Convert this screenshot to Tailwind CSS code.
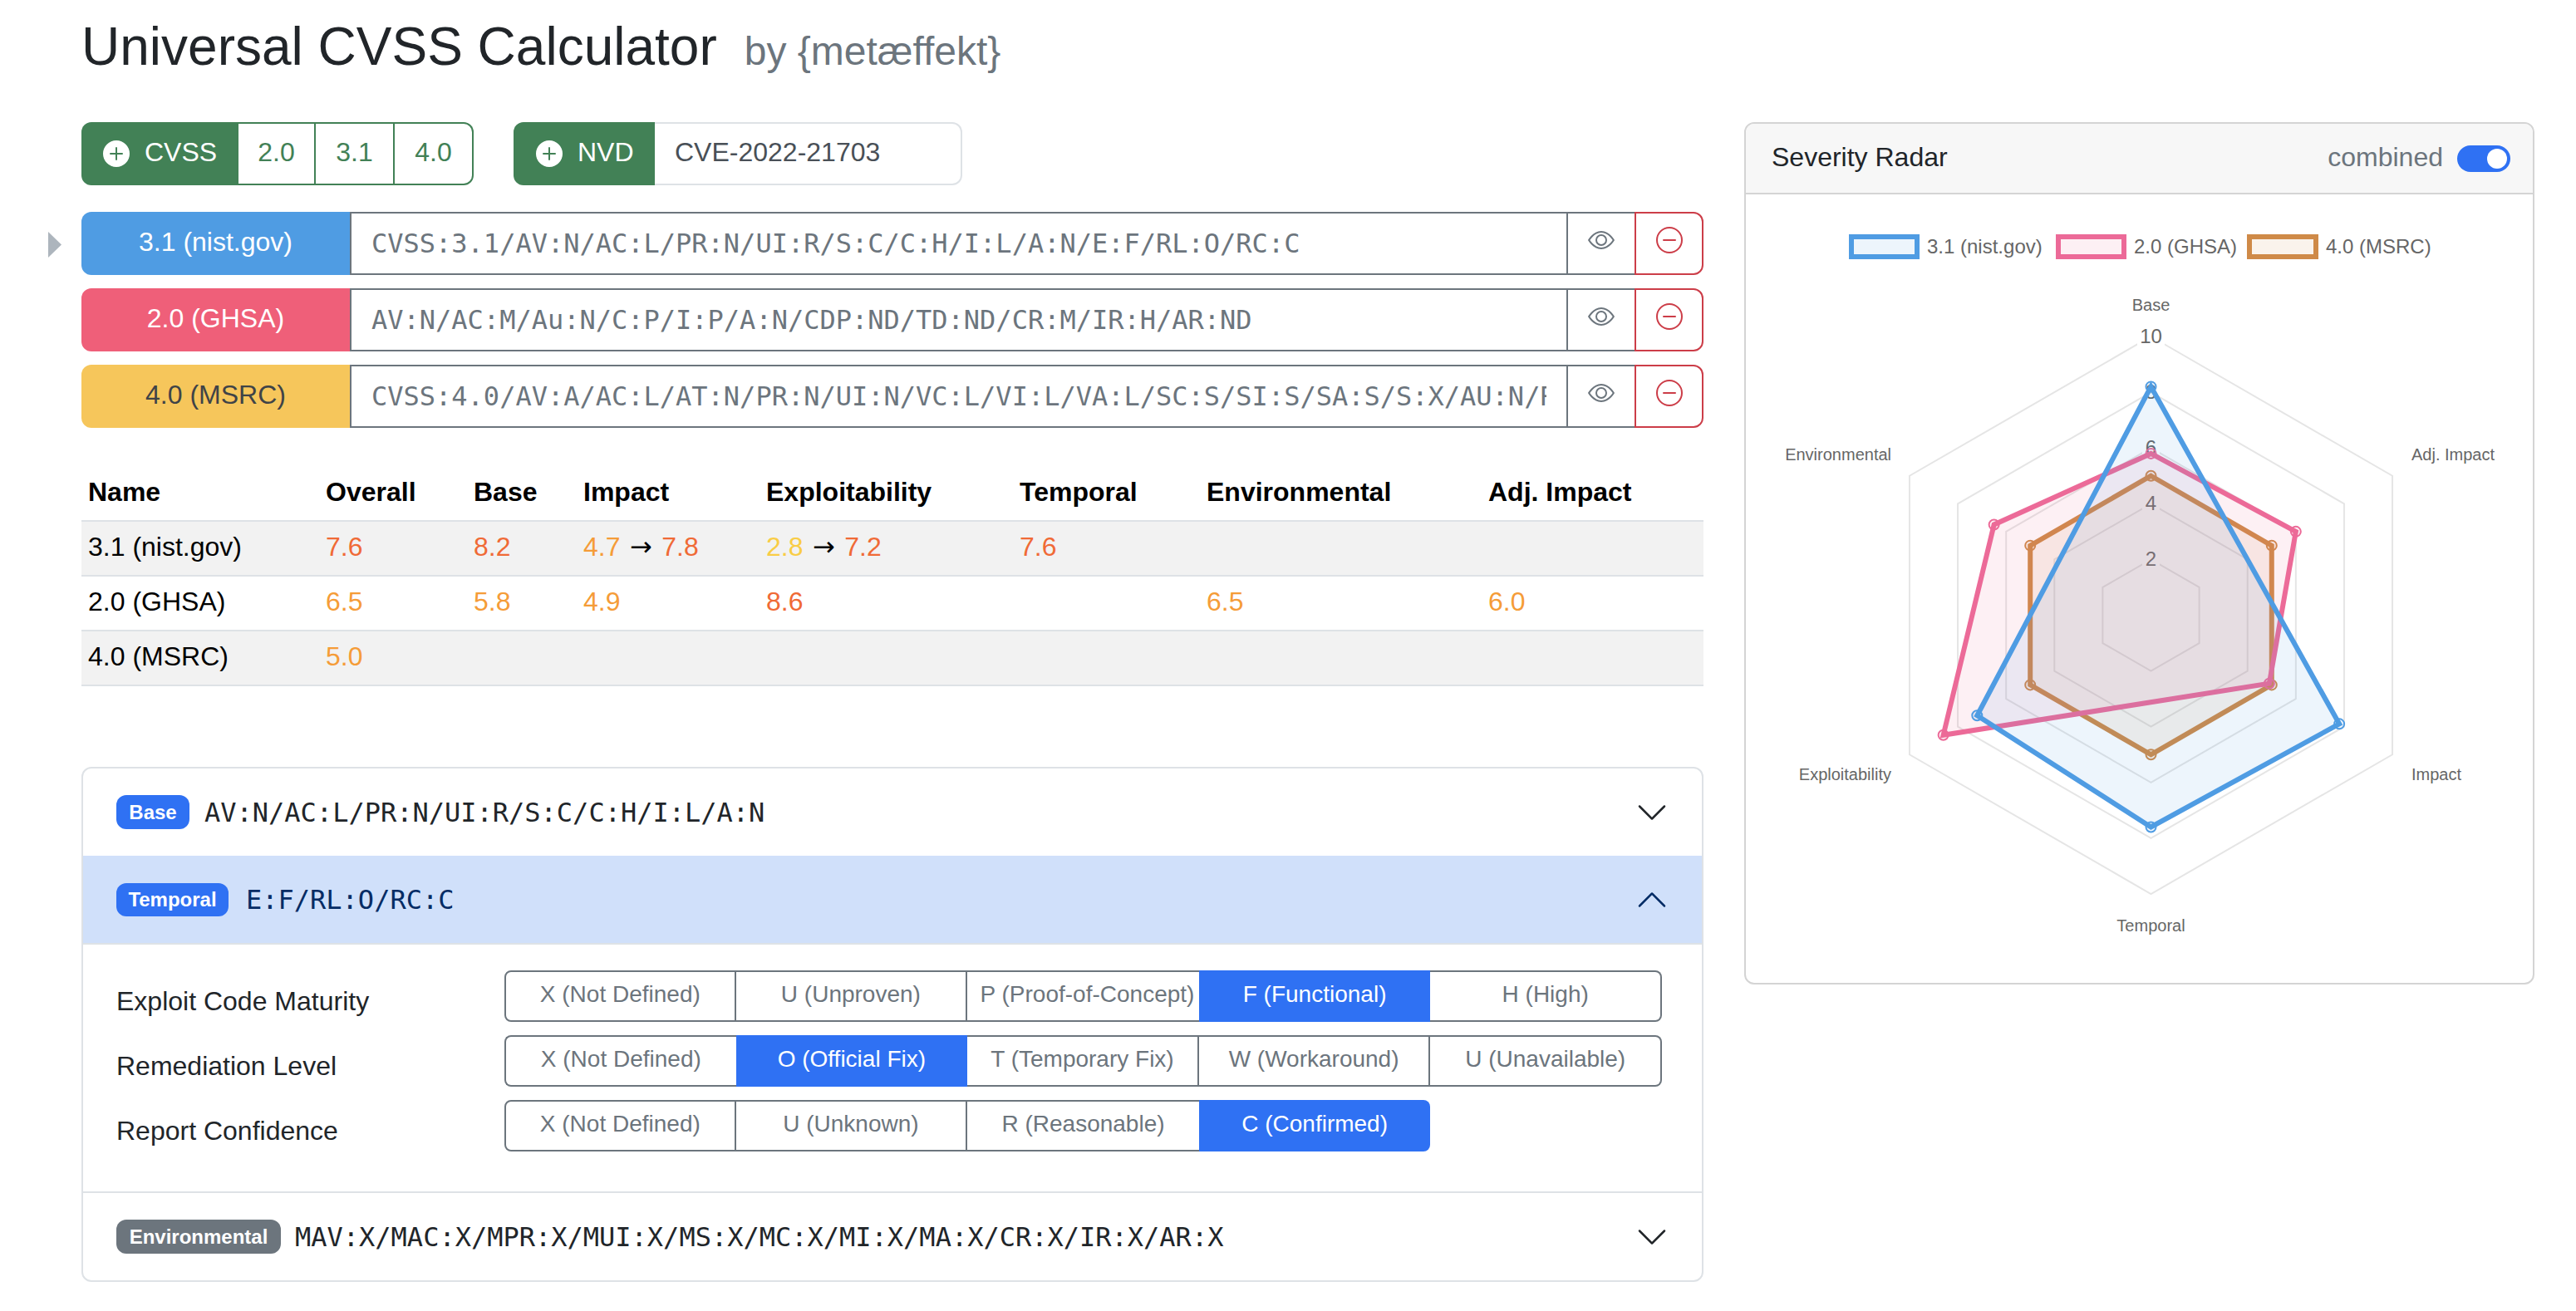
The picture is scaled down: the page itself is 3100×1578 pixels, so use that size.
<!DOCTYPE html>
<html>
<head>
    <meta charset="utf-8">
    <title>Universal CVSS Calculator</title>
    <script src="https://cdn.jsdelivr.net/npm/@tailwindcss/browser@4"></script>
</head>
<body class="bg-white text-[#212529] font-['Liberation_Sans',Arial,sans-serif] text-[32px] leading-[48px]">
<div class="w-[3100px] h-[1578px] overflow-hidden pl-[98px] pr-[50px]">
    <!-- title -->
    <div class="flex items-baseline pt-[18px] h-[147px]">
        <h1 class="text-[64px] leading-[77px]">Universal CVSS Calculator</h1>
        <span class="ml-[33px] text-[48px] leading-[77px] text-[#6c757d]">by {metæffekt}</span>
    </div>

    <div class="flex gap-[49px]">
        <!-- left column -->
        <div class="w-[1952px] shrink-0">
            <!-- import bar -->
            <div class="flex gap-[48px] h-[76px]">
                <div class="flex w-[472px]">
                    <div class="w-[189px] shrink-0 flex items-center pl-[26px] gap-[18px] bg-[#428156] text-white rounded-l-[12px]">
                        <svg class="w-[32px] h-[32px]" viewBox="0 0 16 16" fill="currentColor"><path d="M16 8A8 8 0 1 1 0 8a8 8 0 0 1 16 0zM8.5 4.5a.5.5 0 0 0-1 0v3h-3a.5.5 0 0 0 0 1h3v3a.5.5 0 0 0 1 0v-3h3a.5.5 0 0 0 0-1h-3v-3z"/></svg>
                        <span class="pb-[4px]">CVSS</span>
                    </div>
                    <div class="flex-1 flex items-center justify-center pb-[4px] border-y-2 border-r-2 border-[#428156] text-[#428156]">2.0</div>
                    <div class="w-[95px] flex items-center justify-center pb-[4px] border-y-2 border-r-2 border-[#428156] text-[#428156]">3.1</div>
                    <div class="w-[95px] flex items-center justify-center pb-[4px] border-y-2 border-r-2 border-[#428156] text-[#428156] rounded-r-[12px]">4.0</div>
                </div>
                <div class="flex w-[540px]">
                    <div class="w-[170px] shrink-0 flex items-center pl-[27px] gap-[18px] bg-[#428156] text-white rounded-l-[12px]">
                        <svg class="w-[32px] h-[32px]" viewBox="0 0 16 16" fill="currentColor"><path d="M16 8A8 8 0 1 1 0 8a8 8 0 0 1 16 0zM8.5 4.5a.5.5 0 0 0-1 0v3h-3a.5.5 0 0 0 0 1h3v3a.5.5 0 0 0 1 0v-3h3a.5.5 0 0 0 0-1h-3v-3z"/></svg>
                        <span class="pb-[4px]">NVD</span>
                    </div>
                    <div class="flex-1 flex items-center pl-[24px] pb-[4px] border-y-2 border-r-2 border-[#dee2e6] rounded-r-[12px] text-[#495057]">CVE-2022-21703</div>
                </div>
            </div>

            <!-- vectors -->
            <div class="mt-[32px] flex flex-col gap-[16px]">
                <div class="relative flex h-[76px]">
                    <svg class="absolute left-[-40px] top-[24px] w-[16px] h-[31px]" viewBox="0 0 16 31"><polygon points="0,0 16,15.5 0,31" fill="#adb5bd"/></svg>
                    <div class="w-[323px] shrink-0 flex items-center justify-center pb-[4px] bg-[#4f9ce3] text-white rounded-l-[12px]">3.1 (nist.gov)</div>
                    <div class="flex-1 min-w-0 flex items-center pl-[24px] pr-[24px] border-y-2 border-l-2 border-[#6c757d] text-[#6c757d] font-['DejaVu_Sans_Mono',monospace]"><span class="block overflow-hidden whitespace-nowrap">CVSS:3.1/AV:N/AC:L/PR:N/UI:R/S:C/C:H/I:L/A:N/E:F/RL:O/RC:C</span></div>
                    <div class="w-[82px] shrink-0 flex items-center justify-center pb-[8px] border-y-2 border-l-2 border-[#6c757d] text-[#6c757d]">
                        <svg class="w-[32px] h-[32px]" viewBox="0 0 16 16" fill="currentColor"><path d="M16 8s-3-5.5-8-5.5S0 8 0 8s3 5.5 8 5.5S16 8 16 8zM1.173 8a13.133 13.133 0 0 1 1.66-2.043C4.12 4.668 5.88 3.5 8 3.5c2.12 0 3.879 1.168 5.168 2.457A13.133 13.133 0 0 1 14.828 8c-.058.087-.122.183-.195.288-.335.48-.83 1.12-1.465 1.755C11.879 11.332 10.119 12.5 8 12.5c-2.12 0-3.879-1.168-5.168-2.457A13.134 13.134 0 0 1 1.172 8z"/><path d="M8 5.5a2.5 2.5 0 1 0 0 5 2.5 2.5 0 0 0 0-5zM4.5 8a3.5 3.5 0 1 1 7 0 3.5 3.5 0 0 1-7 0z"/></svg>
                    </div>
                    <div class="w-[83px] shrink-0 flex items-center justify-center pb-[8px] border-2 border-[#cc3d48] rounded-r-[12px] text-[#cc3d48]">
                        <svg class="w-[32px] h-[32px]" viewBox="0 0 16 16" fill="currentColor"><path d="M8 15A7 7 0 1 1 8 1a7 7 0 0 1 0 14zm0 1A8 8 0 1 0 8 0a8 8 0 0 0 0 16z"/><path d="M4 8a.5.5 0 0 1 .5-.5h7a.5.5 0 0 1 0 1h-7A.5.5 0 0 1 4 8z"/></svg>
                    </div>
                </div>
                <div class="flex h-[76px]">
                    <div class="w-[323px] shrink-0 flex items-center justify-center pb-[4px] bg-[#ef5f79] text-white rounded-l-[12px]">2.0 (GHSA)</div>
                    <div class="flex-1 min-w-0 flex items-center pl-[24px] pr-[24px] border-y-2 border-l-2 border-[#6c757d] text-[#6c757d] font-['DejaVu_Sans_Mono',monospace]"><span class="block overflow-hidden whitespace-nowrap">AV:N/AC:M/Au:N/C:P/I:P/A:N/CDP:ND/TD:ND/CR:M/IR:H/AR:ND</span></div>
                    <div class="w-[82px] shrink-0 flex items-center justify-center pb-[8px] border-y-2 border-l-2 border-[#6c757d] text-[#6c757d]">
                        <svg class="w-[32px] h-[32px]" viewBox="0 0 16 16" fill="currentColor"><path d="M16 8s-3-5.5-8-5.5S0 8 0 8s3 5.5 8 5.5S16 8 16 8zM1.173 8a13.133 13.133 0 0 1 1.66-2.043C4.12 4.668 5.88 3.5 8 3.5c2.12 0 3.879 1.168 5.168 2.457A13.133 13.133 0 0 1 14.828 8c-.058.087-.122.183-.195.288-.335.48-.83 1.12-1.465 1.755C11.879 11.332 10.119 12.5 8 12.5c-2.12 0-3.879-1.168-5.168-2.457A13.134 13.134 0 0 1 1.172 8z"/><path d="M8 5.5a2.5 2.5 0 1 0 0 5 2.5 2.5 0 0 0 0-5zM4.5 8a3.5 3.5 0 1 1 7 0 3.5 3.5 0 0 1-7 0z"/></svg>
                    </div>
                    <div class="w-[83px] shrink-0 flex items-center justify-center pb-[8px] border-2 border-[#cc3d48] rounded-r-[12px] text-[#cc3d48]">
                        <svg class="w-[32px] h-[32px]" viewBox="0 0 16 16" fill="currentColor"><path d="M8 15A7 7 0 1 1 8 1a7 7 0 0 1 0 14zm0 1A8 8 0 1 0 8 0a8 8 0 0 0 0 16z"/><path d="M4 8a.5.5 0 0 1 .5-.5h7a.5.5 0 0 1 0 1h-7A.5.5 0 0 1 4 8z"/></svg>
                    </div>
                </div>
                <div class="flex h-[76px]">
                    <div class="w-[323px] shrink-0 flex items-center justify-center pb-[4px] bg-[#f6c65b] text-[#3f4347] rounded-l-[12px]">4.0 (MSRC)</div>
                    <div class="flex-1 min-w-0 flex items-center pl-[24px] pr-[24px] border-y-2 border-l-2 border-[#6c757d] text-[#6c757d] font-['DejaVu_Sans_Mono',monospace]"><span class="block overflow-hidden whitespace-nowrap">CVSS:4.0/AV:A/AC:L/AT:N/PR:N/UI:N/VC:L/VI:L/VA:L/SC:S/SI:S/SA:S/S:X/AU:N/R:X/V:X/RE:X/U:X</span></div>
                    <div class="w-[82px] shrink-0 flex items-center justify-center pb-[8px] border-y-2 border-l-2 border-[#6c757d] text-[#6c757d]">
                        <svg class="w-[32px] h-[32px]" viewBox="0 0 16 16" fill="currentColor"><path d="M16 8s-3-5.5-8-5.5S0 8 0 8s3 5.5 8 5.5S16 8 16 8zM1.173 8a13.133 13.133 0 0 1 1.66-2.043C4.12 4.668 5.88 3.5 8 3.5c2.12 0 3.879 1.168 5.168 2.457A13.133 13.133 0 0 1 14.828 8c-.058.087-.122.183-.195.288-.335.48-.83 1.12-1.465 1.755C11.879 11.332 10.119 12.5 8 12.5c-2.12 0-3.879-1.168-5.168-2.457A13.134 13.134 0 0 1 1.172 8z"/><path d="M8 5.5a2.5 2.5 0 1 0 0 5 2.5 2.5 0 0 0 0-5zM4.5 8a3.5 3.5 0 1 1 7 0 3.5 3.5 0 0 1-7 0z"/></svg>
                    </div>
                    <div class="w-[83px] shrink-0 flex items-center justify-center pb-[8px] border-2 border-[#cc3d48] rounded-r-[12px] text-[#cc3d48]">
                        <svg class="w-[32px] h-[32px]" viewBox="0 0 16 16" fill="currentColor"><path d="M8 15A7 7 0 1 1 8 1a7 7 0 0 1 0 14zm0 1A8 8 0 1 0 8 0a8 8 0 0 0 0 16z"/><path d="M4 8a.5.5 0 0 1 .5-.5h7a.5.5 0 0 1 0 1h-7A.5.5 0 0 1 4 8z"/></svg>
                    </div>
                </div>
            </div>

            <!-- scores -->
            <table class="mt-[46px] w-full table-fixed border-collapse text-black">
                <colgroup>
                    <col class="w-[286px]"><col class="w-[178px]"><col class="w-[132px]"><col class="w-[220px]"><col class="w-[305px]"><col class="w-[225px]"><col class="w-[339px]"><col class="w-[267px]">
                </colgroup>
                <thead>
                    <tr class="h-[66px] border-b-2 border-[#dee2e6] text-left font-bold">
                        <th class="px-[8px] pb-[4px]">Name</th><th class="px-[8px] pb-[4px]">Overall</th><th class="px-[8px] pb-[4px]">Base</th><th class="px-[8px] pb-[4px]">Impact</th><th class="px-[8px] pb-[4px] whitespace-nowrap">Exploitability</th><th class="px-[8px] pb-[4px]">Temporal</th><th class="px-[8px] pb-[4px]">Environmental</th><th class="px-[8px] pb-[4px]">Adj. Impact</th>
                    </tr>
                </thead>
                <tbody>
                    <tr class="h-[66px] border-b-2 border-[#dee2e6] bg-[#f2f2f2]">
                        <td class="px-[8px] pb-[4px]">3.1 (nist.gov)</td>
                        <td class="px-[8px] pb-[4px] text-[#f06a36]">7.6</td>
                        <td class="px-[8px] pb-[4px] text-[#f06a36]">8.2</td>
                        <td class="px-[8px] pb-[4px] whitespace-nowrap"><span class="text-[#f59c38]">4.7</span> <span class="inline-block w-[32px] text-center font-['DejaVu_Sans',sans-serif]">→</span> <span class="text-[#f06a36]">7.8</span></td>
                        <td class="px-[8px] pb-[4px] whitespace-nowrap"><span class="text-[#f9cd45]">2.8</span> <span class="inline-block w-[32px] text-center font-['DejaVu_Sans',sans-serif]">→</span> <span class="text-[#f06a36]">7.2</span></td>
                        <td class="px-[8px] pb-[4px] text-[#f06a36]">7.6</td>
                        <td class="px-[8px]"></td>
                        <td class="px-[8px]"></td>
                    </tr>
                    <tr class="h-[66px] border-b-2 border-[#dee2e6]">
                        <td class="px-[8px] pb-[4px]">2.0 (GHSA)</td>
                        <td class="px-[8px] pb-[4px] text-[#f59c38]">6.5</td>
                        <td class="px-[8px] pb-[4px] text-[#f59c38]">5.8</td>
                        <td class="px-[8px] pb-[4px] text-[#f59c38]">4.9</td>
                        <td class="px-[8px] pb-[4px] text-[#f06a36]">8.6</td>
                        <td class="px-[8px]"></td>
                        <td class="px-[8px] pb-[4px] text-[#f59c38]">6.5</td>
                        <td class="px-[8px] pb-[4px] text-[#f59c38]">6.0</td>
                    </tr>
                    <tr class="h-[66px] border-b-2 border-[#dee2e6] bg-[#f2f2f2]">
                        <td class="px-[8px] pb-[4px]">4.0 (MSRC)</td>
                        <td class="px-[8px] pb-[4px] text-[#f59c38]">5.0</td>
                        <td class="px-[8px]"></td><td class="px-[8px]"></td><td class="px-[8px]"></td><td class="px-[8px]"></td><td class="px-[8px]"></td><td class="px-[8px]"></td>
                    </tr>
                </tbody>
            </table>

            <!-- accordion -->
            <div class="mt-[97px] border-2 border-[#dee2e6] rounded-[12px] overflow-hidden">
                <div class="h-[105px] flex items-center pl-[40px] pr-[40px]">
                    <span class="h-[41px] w-[88px] flex items-center justify-center bg-[#2f71f3] text-white text-[24px] font-bold rounded-[12px]">Base</span>
                    <span class="ml-[18px] font-['DejaVu_Sans_Mono',monospace] text-[#212529]">AV:N/AC:L/PR:N/UI:R/S:C/C:H/I:L/A:N</span>
                    <svg class="ml-auto w-[40px] h-[40px] text-[#212529]" viewBox="0 0 16 16" fill="currentColor"><path fill-rule="evenodd" d="M1.646 4.646a.5.5 0 0 1 .708 0L8 10.293l5.646-5.647a.5.5 0 0 1 .708.708l-6 6a.5.5 0 0 1-.708 0l-6-6a.5.5 0 0 1 0-.708z"/></svg>
                </div>
                <div class="h-[107px] flex items-center pl-[40px] pr-[40px] bg-[#d0e0fa] border-b-2 border-[#dee2e6]">
                    <span class="h-[40px] w-[135px] flex items-center justify-center bg-[#2f71f3] text-white text-[24px] font-bold rounded-[12px]">Temporal</span>
                    <span class="ml-[21px] font-['DejaVu_Sans_Mono',monospace] text-[#052c65]">E:F/RL:O/RC:C</span>
                    <svg class="ml-auto w-[40px] h-[40px] text-[#052c65] rotate-180" viewBox="0 0 16 16" fill="currentColor"><path fill-rule="evenodd" d="M1.646 4.646a.5.5 0 0 1 .708 0L8 10.293l5.646-5.647a.5.5 0 0 1 .708.708l-6 6a.5.5 0 0 1-.708 0l-6-6a.5.5 0 0 1 0-.708z"/></svg>
                </div>
                <div class="pt-[31px] pb-[48px] pl-[40px] pr-[48px] flex flex-col gap-[16px] border-b-2 border-[#dee2e6]">
                    <div class="flex h-[62px]">
                        <div class="w-[467px] shrink-0 pt-[13px]">Exploit Code Maturity</div>
                        <div class="flex-1 grid grid-cols-5 text-[28px] text-[#6c757d]">
                            <div class="flex items-center justify-center pb-[4px] border-2 border-[#6c757d] rounded-l-[8px]">X (Not Defined)</div>
                            <div class="flex items-center justify-center pb-[4px] border-y-2 border-r-2 border-[#6c757d]">U (Unproven)</div>
                            <div class="flex items-center justify-center pb-[4px] pl-[10px] border-y-2 border-[#6c757d] whitespace-nowrap">P (Proof-of-Concept)</div>
                            <div class="flex items-center justify-center pb-[4px] bg-[#2f71f3] text-white">F (Functional)</div>
                            <div class="flex items-center justify-center pb-[4px] border-y-2 border-r-2 border-[#6c757d] rounded-r-[8px]">H (High)</div>
                        </div>
                    </div>
                    <div class="flex h-[62px]">
                        <div class="w-[467px] shrink-0 pt-[13px]">Remediation Level</div>
                        <div class="flex-1 grid grid-cols-5 text-[28px] text-[#6c757d]">
                            <div class="flex items-center justify-center pb-[4px] border-2 border-r-0 border-[#6c757d] rounded-l-[8px]">X (Not Defined)</div>
                            <div class="flex items-center justify-center pb-[4px] bg-[#2f71f3] text-white">O (Official Fix)</div>
                            <div class="flex items-center justify-center pb-[4px] border-y-2 border-r-2 border-[#6c757d]">T (Temporary Fix)</div>
                            <div class="flex items-center justify-center pb-[4px] border-y-2 border-r-2 border-[#6c757d]">W (Workaround)</div>
                            <div class="flex items-center justify-center pb-[4px] border-y-2 border-r-2 border-[#6c757d] rounded-r-[8px]">U (Unavailable)</div>
                        </div>
                    </div>
                    <div class="flex h-[62px]">
                        <div class="w-[467px] shrink-0 pt-[13px]">Report Confidence</div>
                        <div class="flex-1 grid grid-cols-5 text-[28px] text-[#6c757d]">
                            <div class="flex items-center justify-center pb-[4px] border-2 border-[#6c757d] rounded-l-[8px]">X (Not Defined)</div>
                            <div class="flex items-center justify-center pb-[4px] border-y-2 border-r-2 border-[#6c757d]">U (Unknown)</div>
                            <div class="flex items-center justify-center pb-[4px] border-y-2 border-[#6c757d]">R (Reasonable)</div>
                            <div class="flex items-center justify-center pb-[4px] bg-[#2f71f3] text-white rounded-r-[8px]">C (Confirmed)</div>
                        </div>
                    </div>
                </div>
                <div class="h-[105px] flex items-center pl-[40px] pr-[40px]">
                    <span class="h-[41px] w-[198px] flex items-center justify-center bg-[#6c757d] text-white text-[24px] font-bold rounded-[12px]">Environmental</span>
                    <span class="ml-[17px] font-['DejaVu_Sans_Mono',monospace] text-[#212529]">MAV:X/MAC:X/MPR:X/MUI:X/MS:X/MC:X/MI:X/MA:X/CR:X/IR:X/AR:X</span>
                    <svg class="ml-auto w-[40px] h-[40px] text-[#212529]" viewBox="0 0 16 16" fill="currentColor"><path fill-rule="evenodd" d="M1.646 4.646a.5.5 0 0 1 .708 0L8 10.293l5.646-5.647a.5.5 0 0 1 .708.708l-6 6a.5.5 0 0 1-.708 0l-6-6a.5.5 0 0 1 0-.708z"/></svg>
                </div>
            </div>
        </div>

        <!-- radar card -->
        <div class="w-[951px] h-[1038px] shrink-0 border-2 border-[#d4d4d4] rounded-[12px] overflow-hidden">
            <div class="h-[85px] flex items-center pl-[31px] pr-[27px] bg-[#f7f7f7] border-b-2 border-[#d4d4d4]">
                <span class="pb-[4px]">Severity Radar</span>
                <span class="ml-auto pb-[4px] text-[#6c757d]">combined</span>
                <span class="ml-[17px] w-[64px] h-[32px] rounded-full bg-[#2f71f3] flex items-center justify-end pr-[4px]"><span class="w-[24px] h-[24px] rounded-full bg-white"></span></span>
            </div>
            <svg class="block" width="947" height="947" viewBox="2100 235 947 947" fill="none">
                <!-- legend -->
                <g stroke-width="6">
                    <rect x="2227" y="286" width="79" height="24" fill="#4f9ce3" fill-opacity=".1" stroke="#4f9ce3"/>
                    <rect x="2476" y="286" width="79" height="24" fill="#ec6a98" fill-opacity=".1" stroke="#ec6a98"/>
                    <rect x="2706" y="286" width="80" height="24" fill="#cf8a48" fill-opacity=".1" stroke="#cf8a48"/>
                </g>
                <g fill="#666666" font-size="24">
                    <text x="2318" y="306">3.1 (nist.gov)</text>
                    <text x="2567" y="306">2.0 (GHSA)</text>
                    <text x="2798" y="306">4.0 (MSRC)</text>
                </g>
                <!-- grid -->
                <g stroke="#e5e5e5" stroke-width="2">
                    <polygon points="2587.5,674.4 2645.61,707.95 2645.61,775.05 2587.5,808.6 2529.39,775.05 2529.39,707.95"/>
                    <polygon points="2587.5,607.3 2703.72,674.4 2703.72,808.6 2587.5,875.7 2471.28,808.6 2471.28,674.4"/>
                    <polygon points="2587.5,540.2 2761.83,640.85 2761.83,842.15 2587.5,942.8 2413.17,842.15 2413.17,640.85"/>
                    <polygon points="2587.5,473.1 2819.94,607.3 2819.94,875.7 2587.5,1009.9 2355.06,875.7 2355.06,607.3"/>
                    <polygon points="2587.5,406 2878.05,573.75 2878.05,909.25 2587.5,1077 2296.95,909.25 2296.95,573.75"/>
                </g>
                <!-- tick labels -->
                <g fill="#ffffff">
                    <rect x="2571" y="392" width="33" height="28"/>
                    <rect x="2577" y="526" width="21" height="28"/>
                    <rect x="2577" y="593" width="21" height="28"/>
                    <rect x="2577" y="660" width="21" height="28"/>
                </g>
                <g fill="#666666" font-size="24" text-anchor="middle">
                    <text x="2587.5" y="414">10</text>
                    <text x="2587.5" y="481">8</text>
                    <text x="2587.5" y="548">6</text>
                    <text x="2587.5" y="615">4</text>
                    <text x="2587.5" y="682">2</text>
                </g>
                <!-- point labels -->
                <g fill="#666666" font-size="20">
                    <text x="2587.5" y="375" text-anchor="middle">Base</text>
                    <text x="2901" y="555">Adj. Impact</text>
                    <text x="2901" y="940">Impact</text>
                    <text x="2587.5" y="1122" text-anchor="middle">Temporal</text>
                    <text x="2275" y="940" text-anchor="end">Exploitability</text>
                    <text x="2275" y="555" text-anchor="end">Environmental</text>
                </g>
                <!-- 4.0 (MSRC) -->
                <g stroke="#cf8a48">
                    <polygon points="2587.5,573.75 2732.78,657.63 2732.78,825.38 2587.5,909.25 2442.22,825.38 2442.22,657.63" fill="#cf8a48" fill-opacity=".1" stroke-width="6"/>
                    <g fill="#cf8a48" fill-opacity=".1" stroke-width="2">
                        <circle cx="2587.5" cy="573.75" r="6"/><circle cx="2732.78" cy="657.63" r="6"/><circle cx="2732.78" cy="825.38" r="6"/><circle cx="2587.5" cy="909.25" r="6"/><circle cx="2442.22" cy="825.38" r="6"/><circle cx="2442.22" cy="657.63" r="6"/>
                    </g>
                </g>
                <!-- 2.0 (GHSA) -->
                <g stroke="#ec6a98">
                    <polygon points="2587.5,546.91 2761.83,640.85 2729.87,823.7 2337.63,885.77 2398.64,632.46" fill="#ec6a98" fill-opacity=".1" stroke-width="6"/>
                    <g fill="#ec6a98" fill-opacity=".1" stroke-width="2">
                        <circle cx="2587.5" cy="546.91" r="6"/><circle cx="2761.83" cy="640.85" r="6"/><circle cx="2729.87" cy="823.7" r="6"/><circle cx="2337.63" cy="885.77" r="6"/><circle cx="2398.64" cy="632.46" r="6"/>
                    </g>
                </g>
                <!-- 3.1 (nist.gov) -->
                <g stroke="#4f9ce3">
                    <polygon points="2587.5,466.39 2814.13,872.35 2587.5,996.48 2378.3,862.28" fill="#4f9ce3" fill-opacity=".1" stroke-width="6"/>
                    <g fill="#4f9ce3" fill-opacity=".1" stroke-width="2">
                        <circle cx="2587.5" cy="466.39" r="6"/><circle cx="2814.13" cy="872.35" r="6"/><circle cx="2587.5" cy="996.48" r="6"/><circle cx="2378.3" cy="862.28" r="6"/>
                    </g>
                </g>
            </svg>
        </div>
    </div>
</div>
</body>
</html>
